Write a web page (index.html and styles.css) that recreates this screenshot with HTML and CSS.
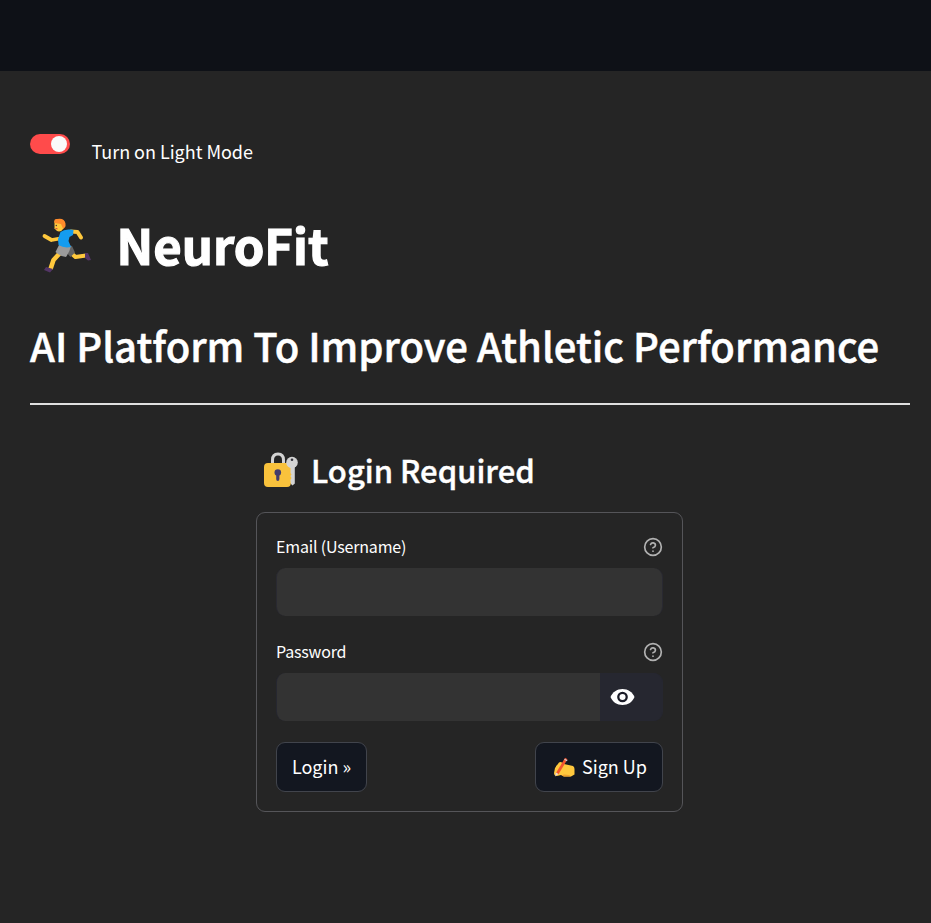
FILE: index.html
```html
<!DOCTYPE html>
<html lang="en">
<head>
<meta charset="utf-8">
<title>NeuroFit</title>
<link rel="stylesheet" href="styles.css">
</head>
<body>
<header class="topbar"></header>
<main class="page">
  <div class="mode">
    <span class="toggle"><span class="knob"></span></span>
    <span class="mode-label">Turn on Light Mode</span>
  </div>
  <h1 class="brand">
    <svg class="runner" viewBox="0 0 80 80" aria-hidden="true">
      <path d="M30 48 L23.500 55 L20.500 64" fill="none" stroke="#ffc83d" stroke-width="4.600" stroke-linejoin="round"/>
      <path d="M41 48 L45.500 52 L56 50.500" fill="none" stroke="#ffc83d" stroke-width="4.200" stroke-linejoin="round"/>
      <path d="M55 48 L58 48 L61 55 L58 55.500 L55 53Z M16 62 L23 64 L20 67.500 L14 65Z" fill="#533566"/>
      <path d="M30 33.500 L21.500 35 L14.500 31" fill="none" stroke="#ffc83d" stroke-width="3.800" stroke-linecap="round" stroke-linejoin="round"/>
      <path d="M41 26.500 L47.500 27 L51 32.500" fill="none" stroke="#ffc83d" stroke-width="4" stroke-linecap="round" stroke-linejoin="round"/>
      <path d="M38 40 L42 41 L45 47.500 L40.500 52 L35 46Z" fill="#636363"/>
      <path d="M29 40 L41 41 Q40 46 36 52 Q30 51.500 25.500 47Z" fill="#9b9b9b"/>
      <path d="M30.500 27 Q34 24 40 24.500 L43.500 25 L43 30 L39.500 32 L38.500 36 L41 42 Q34 43.500 28.500 40 L28 34Z" fill="#149cf0"/>
      <path d="M24.500 16 H34 V23 Q31 27.500 27 26 L24.500 23.500Z" fill="#ffc83d"/>
      <path d="M24.500 18 Q23.500 13.500 27 14 Q34.500 12.500 35.500 18.500 Q36 23 33 23.500 L31 19 L24.500 18Z" fill="#ff8b2b"/>
      <circle cx="26.300" cy="20.500" r="0.700" fill="#46333c"/>
      <path d="M25.500 23.500 L27.500 23.800" stroke="#d2453b" stroke-width="1"/>
    </svg>
    <span class="brand-name">NeuroFit</span>
  </h1>
  <h2 class="tagline"><span>AI Platform To Improve Athletic Performance</span></h2>
  <hr class="rule">
  <section class="login">
    <h3 class="login-title">
      <svg class="lock" viewBox="1 0 55 50" aria-hidden="true">
        <path d="M17.500 20 V15 Q17.500 9 23 9 Q28.500 9 28.500 15 V20" fill="none" stroke="#d3d3d3" stroke-width="3"/>
        <path d="M35 22 H39.800 V38.500 L37.500 40.500 L35 38 V22Z" fill="#d3d3d3"/>
        <path d="M13 18 H32 Q35.500 18 35.500 22 V28 L36.500 29.500 L35.400 31 L36.500 33 L35.400 35 L35.700 38 Q36 42 32 42 H13 Q9 42 9 38 V22 Q9 18 13 18Z" fill="#f9c23c"/>
        <circle cx="37" cy="17.500" r="5.800" fill="#d3d3d3"/>
        <circle cx="37" cy="14.800" r="1.300" fill="#33323b"/>
        <circle cx="22.800" cy="27.500" r="3.300" fill="#433b6b"/>
        <path d="M21.200 28 H24.400 V34 Q24.400 36 22.800 36 Q21.200 36 21.200 34Z" fill="#433b6b"/>
      </svg>
      <span>Login Required</span>
    </h3>
    <form class="card">
      <div class="label-row">
        <label for="email">Email (Username)</label>
        <svg class="help" viewBox="0 0 24 24" aria-hidden="true"><circle cx="12" cy="12" r="10"/><path d="M9.090 9a3 3 0 0 1 5.830 1c0 2-3 3-3 3M12 17h.01"/></svg>
      </div>
      <input class="field" id="email" type="text">
      <div class="label-row second">
        <label for="password">Password</label>
        <svg class="help" viewBox="0 0 24 24" aria-hidden="true"><circle cx="12" cy="12" r="10"/><path d="M9.090 9a3 3 0 0 1 5.830 1c0 2-3 3-3 3M12 17h.01"/></svg>
      </div>
      <div class="password">
        <input class="password-input" id="password" type="password">
        <button class="reveal" type="button" aria-label="Show password">
          <svg class="eye" viewBox="0 0 24 16" aria-hidden="true"><path d="M0 8C2 3 6.500 0 12 0S22 3 24 8C22 13 17.500 16 12 16S2 13 0 8Z" fill="#fff"/><circle cx="12" cy="8" r="4.200" fill="#fff" stroke="#1b1c28" stroke-width="2.300"/></svg>
        </button>
      </div>
      <div class="actions">
        <button class="btn btn-login" type="button"><span>Login »</span></button>
        <button class="btn btn-signup" type="button">
          <svg class="writing" viewBox="0 0 22 22" aria-hidden="true">
            <path d="M6 6.500 Q8 5 11 8 L20 10 Q21.500 11 21.500 13 V18.500 L18 20.500 H11 L8 19 L4 20 Q1 20 1 17 L2 12Z" fill="#ffc83d"/>
            <path d="M8.500 19.500 L11 18.500 L16 19 L18 20.500 H11Z" fill="#efa22e"/>
            <path d="M4.300 17.500 L13.300 2.500" stroke="#f3552f" stroke-width="2.800" fill="none"/>
            <path d="M11.500 3.300 L14.200 4.800" stroke="#d3cfd3" stroke-width="1.200"/>
            <path d="M2.900 16.500 L5.400 18 L2.200 20.500Z" fill="#eadbd2"/>
            <path d="M4 10.500 L7 8.500" stroke="#ffc83d" stroke-width="2" stroke-linecap="round"/>
          </svg>
          <span>Sign Up</span>
        </button>
      </div>
    </form>
  </section>
</main>
</body>
</html>
```
FILE: styles.css
```css
* { box-sizing: border-box; }
body {
  margin: 0;
  min-height: 923px;
  background: #252525;
  color: #fff;
  font-family: "Noto Sans CJK SC", "Noto Sans", sans-serif;
}
h1, h2, h3 { margin: 0; }
svg { display: block; flex: none; }
.topbar { height: 71px; background: #0e1117; }
.page { padding: 63px 21px 0 30px; }
.mode { display: flex; gap: 21.5px; height: 40px; }
.toggle {
  display: flex;
  justify-content: flex-end;
  width: 40px;
  height: 20px;
  padding: 2px 3px;
  border-radius: 10px;
  background: #ff4b4b;
}
.knob { width: 16px; height: 16px; border-radius: 50%; background: #fafafa; }
.mode-label { font-size: 18px; line-height: 34px; white-space: nowrap; letter-spacing: -0.03px; }
.brand { display: flex; height: 80px; margin-top: 31px; align-items: center; }
.runner { width: 80px; height: 80px; }
.brand-name { margin-left: 6.5px; font-size: 49px; line-height: 76px; height: 78px; font-weight: 700; -webkit-text-stroke: 1.2px #fff; }
.tagline { margin-top: 31px; height: 61px; font-size: 40px; line-height: 58px; font-weight: 500; white-space: nowrap; -webkit-text-stroke: 0.5px #fff; }
.rule { height: 2px; margin: 26px 0 0; border: 0; background: #e0e0e0; }
.login { width: 427px; margin: 40px 0 0 226px; }
.login-title { display: flex; height: 50px; font-size: 31px; line-height: 50px; font-weight: 500; -webkit-text-stroke: 0.4px #fff; }
.lock { width: 55px; height: 50px; }
.card { height: 300px; margin-top: 17px; padding: 19px; border: 1px solid #555559; border-radius: 9px; }
.label-row { display: flex; justify-content: space-between; align-items: center; height: 30px; font-size: 16px; line-height: 24px; letter-spacing: -0.18px; }
.label-row label { padding-bottom: 2px; }
.help { width: 20px; height: 20px; fill: none; stroke: #b2b2b2; stroke-width: 2; stroke-linecap: round; stroke-linejoin: round; }
.field { display: block; width: 100%; height: 48px; margin-top: 6px; border: 1px solid #292931; border-width: 0 1px; border-radius: 9px; background: #333; }
.second { margin-top: 21px; }
.password { display: flex; height: 48px; margin-top: 6px; overflow: hidden; border: 1px solid #262730; border-width: 0 1px; border-radius: 9px; background: #262730; }
.password-input { width: 323px; border: 0; background: #333; }
.reveal { flex: 1; padding: 0 0 1px 10px; border: 0; background: #262730; }
.eye { width: 25px; height: 16px; }
.actions { display: flex; justify-content: space-between; margin-top: 21px; }
.btn {
  display: flex;
  align-items: center;
  justify-content: center;
  height: 50px;
  padding: 0;
  border: 1px solid #41444c;
  border-radius: 9px;
  background: #131720;
  color: #fff;
  font: 400 18px/26px "Noto Sans CJK SC", "Noto Sans", sans-serif;
  white-space: nowrap;
}
.btn span { padding-bottom: 2px; }
.btn-login { width: 91px; }
.btn-signup { width: 128px; padding-left: 2px; gap: 7px; }
.writing { width: 22px; height: 22px; }
```
